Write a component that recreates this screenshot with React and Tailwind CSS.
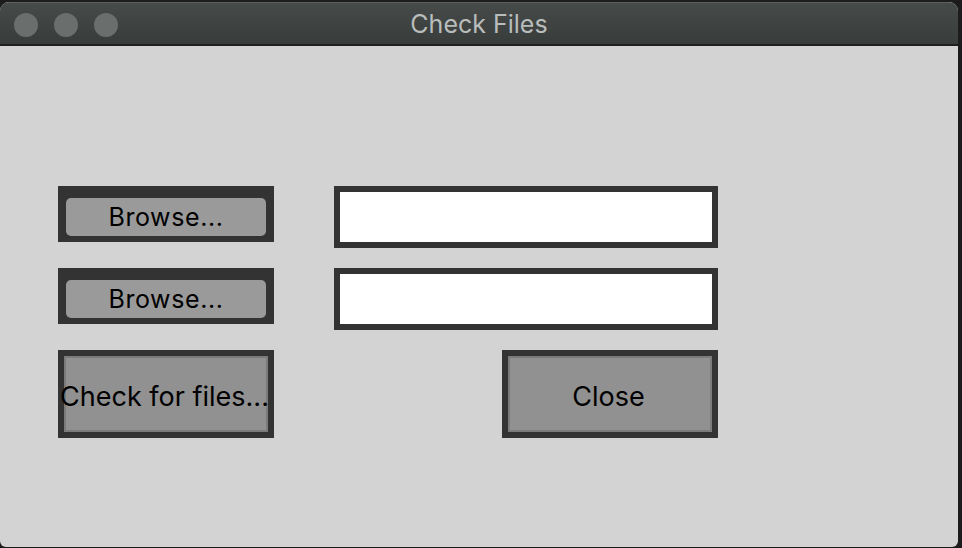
export default function App() {
  return (
    <div className="w-[962px] h-[548px] bg-[#1c1c1c] overflow-hidden" style={{ fontFamily: "Inter, 'Liberation Sans', sans-serif" }}>
      <div className="w-[958px] h-[545px] mt-[2px] flex flex-col rounded-t-[9px] rounded-b-[6px] overflow-hidden bg-[#d3d3d3]">
        <TitleBar />
        <div className="flex-1 flex flex-col gap-[20px] pl-[58px] pt-[140px]">
          <div className="flex items-start gap-[60px]">
            <BrowseButton />
            <FileField />
          </div>
          <div className="flex items-start gap-[60px]">
            <BrowseButton />
            <FileField />
          </div>
          <div className="flex items-start gap-[228px]">
            <BigButton label="Check for files..." />
            <BigButton label="Close" />
          </div>
        </div>
      </div>
    </div>
  );
}

function TitleBar() {
  return (
    <div className="relative h-[44px] flex items-center justify-center bg-gradient-to-b from-[#464b4a] to-[#383c3b] border-t border-[#5a5f5e] border-b-2 border-b-[#1e2020]">
      {/* traffic lights, inactive */}
      <div className="absolute left-[14px] top-[10px] flex gap-[16px]">
        <span className="w-[24px] h-[24px] rounded-full bg-[#6a6f6e]" />
        <span className="w-[24px] h-[24px] rounded-full bg-[#6a6f6e]" />
        <span className="w-[24px] h-[24px] rounded-full bg-[#6a6f6e]" />
      </div>
      <span className="text-[25px] text-[#b8bdbc] pt-[2px]">Check Files</span>
    </div>
  );
}

function BrowseButton() {
  return (
    <div className="w-[216px] h-[56px] bg-[#333333] pt-[12px] pb-[6px] px-[8px]">
      <button className="w-full h-full rounded-[5px] bg-[#9a9a9a] text-[25px] text-black flex items-center justify-center tracking-[0.6px] pt-[2px]">
        Browse...
      </button>
    </div>
  );
}

function FileField() {
  return (
    <input
      type="text"
      className="w-[384px] h-[62px] bg-white border-[6px] border-[#333333] outline-none"
    />
  );
}

function BigButton({ label }) {
  return (
    <div className="w-[216px] h-[88px] bg-[#333333] p-[6px]">
      <button className="w-full h-full border-2 border-[#7b7b7b] bg-[#919191] text-[27px] text-black flex items-center justify-center whitespace-nowrap pt-[7px] pr-[3px]">
        {label}
      </button>
    </div>
  );
}
